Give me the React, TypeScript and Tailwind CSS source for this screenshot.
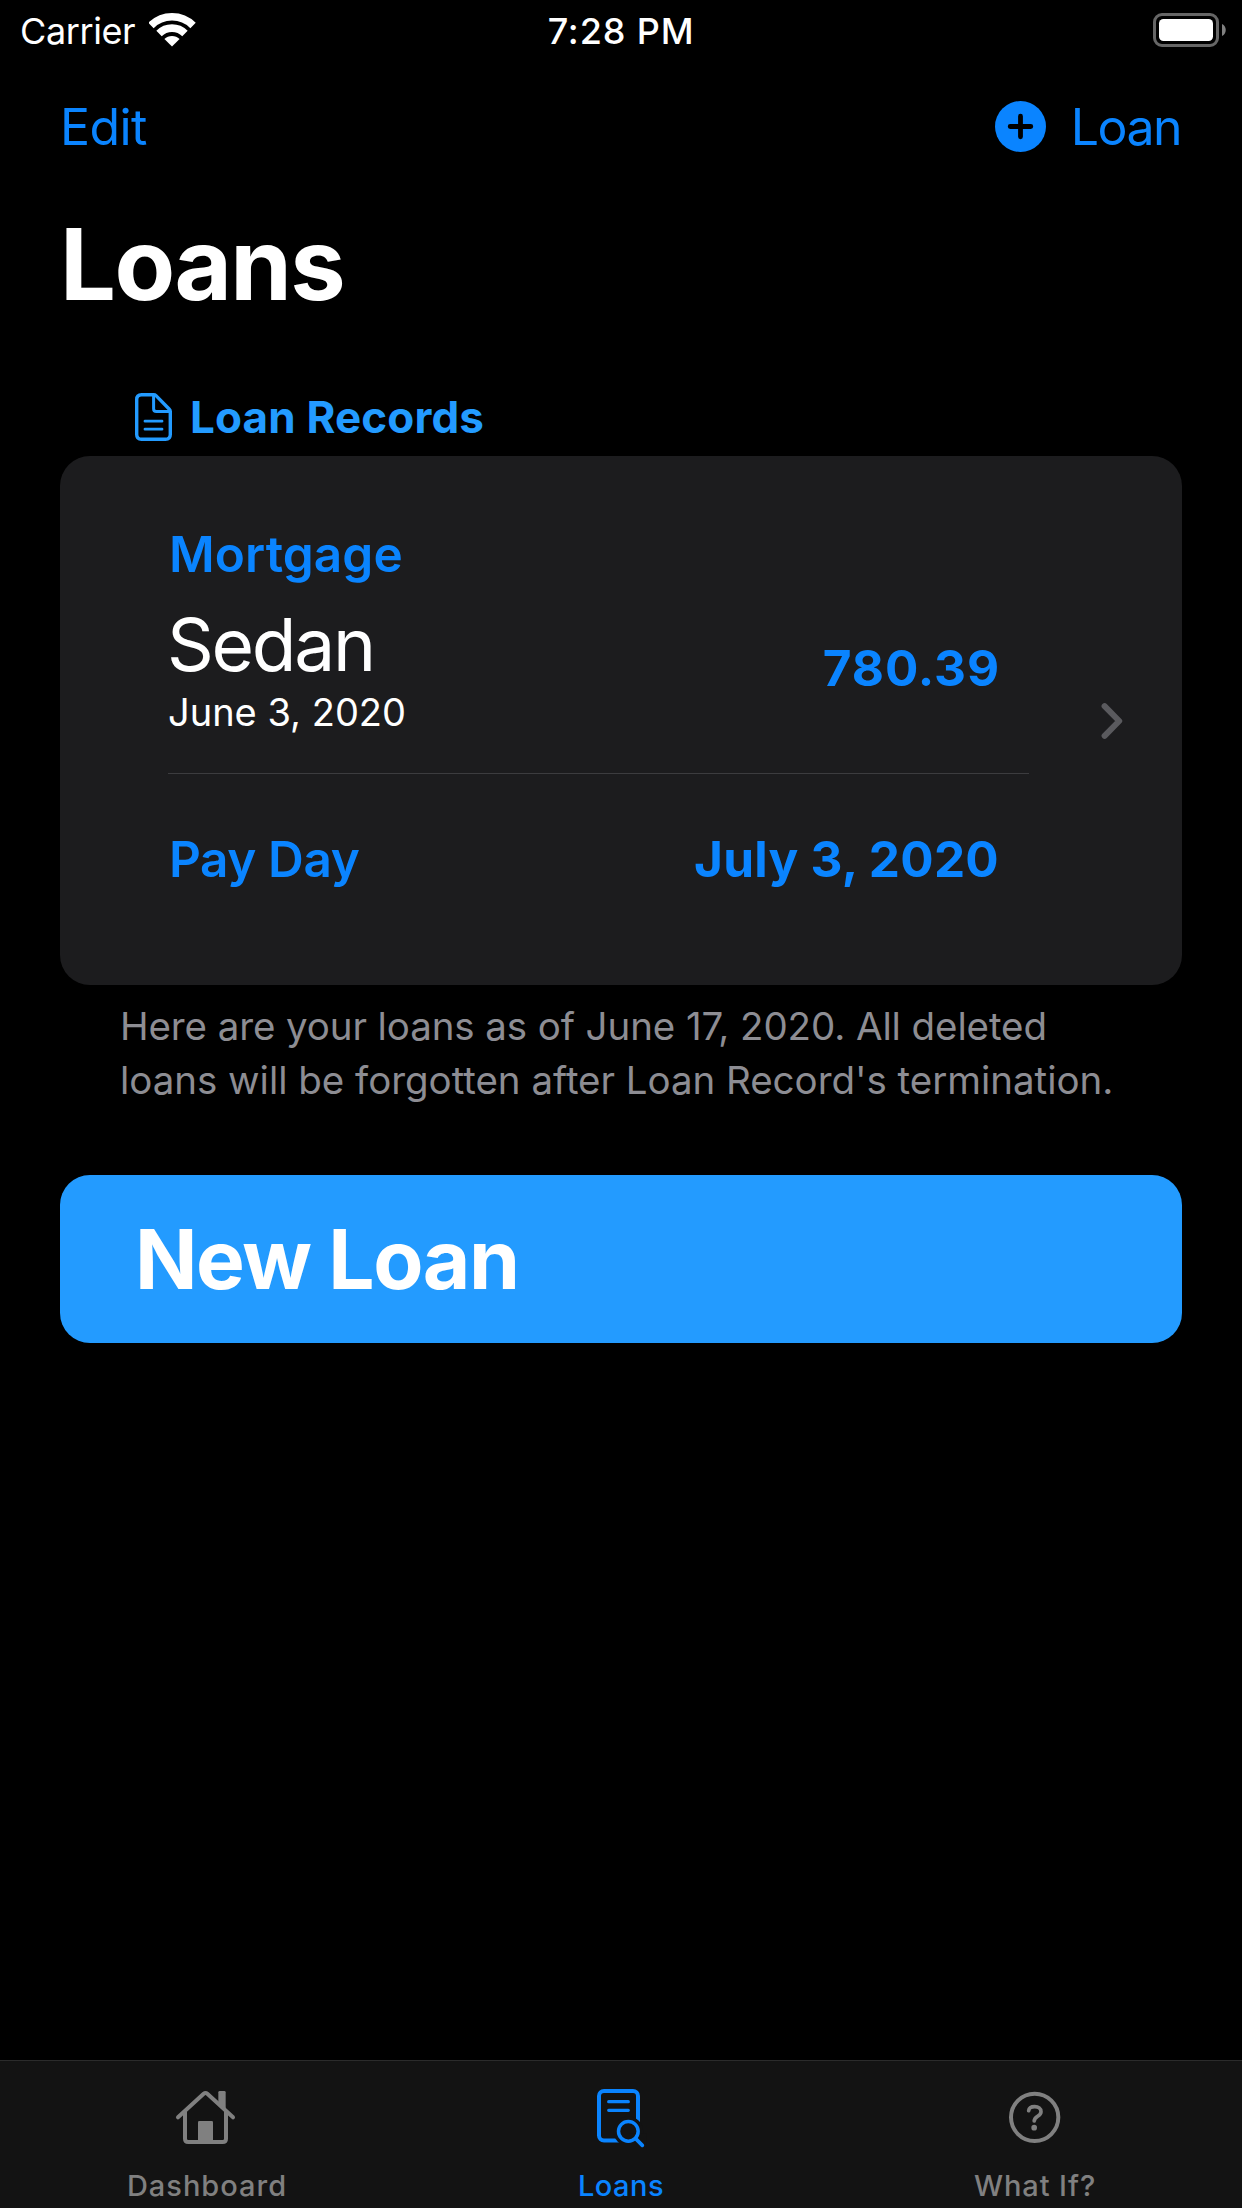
import type { ReactNode } from 'react';

function WifiIcon() {
  return (
    <svg width="48" height="36" viewBox="0 0 48 36" fill="none" stroke="#fff" strokeWidth="7.6">
      <path d="M1.96 13.46A29.75 29.75 0 0 1 44.04 13.46" />
      <path d="M10.03 21.53A18.35 18.35 0 0 1 35.97 21.53" />
      <path d="M23 34.5L15.4 27.1A10.6 10.6 0 0 1 30.6 27.1Z" fill="#fff" stroke="none" />
    </svg>
  );
}

function BatteryIcon() {
  return (
    <svg width="74" height="34" viewBox="0 0 74 34" fill="none">
      <rect x="1.5" y="1.5" width="63" height="31" rx="7.5" stroke="#666" strokeWidth="3" />
      <rect x="6" y="6" width="54" height="22" rx="4.5" fill="#fff" />
      <path d="M69 11C74 13 74 21 69 23Z" fill="#808080" />
    </svg>
  );
}

function PlusCircleIcon() {
  return (
    <svg width="51" height="51" viewBox="0 0 51 51">
      <circle cx="25.5" cy="25.5" r="25.5" fill="#0a84ff" />
      <path d="M25.5 15.2V35.8M15.2 25.5H35.8" stroke="#000" strokeWidth="4.8" strokeLinecap="round" />
    </svg>
  );
}

function DocumentIcon() {
  return (
    <svg width="37" height="48" viewBox="0 0 37 48" fill="none" stroke="#239bff" strokeWidth="3.4" strokeLinejoin="round">
      <path d="M6.5 1.7H18.6C19.6 1.7 20.4 2 21 2.6L34.1 16C34.8 16.7 35.3 17.6 35.3 18.6V41.5Q35.3 46.3 30.5 46.3H6.5Q1.7 46.3 1.7 41.5V6.5Q1.7 1.7 6.5 1.7Z" />
      <path d="M18.6 2V15.8Q18.6 18.6 21.4 18.6H35" strokeWidth="3" />
      <path d="M10 28.2H27M10 36.2H27" strokeWidth="2.8" strokeLinecap="round" />
    </svg>
  );
}

function ChevronIcon() {
  return (
    <svg width="22" height="36" viewBox="0 0 22 36" fill="none">
      <path d="M3.6 3.2L18.2 18L3.6 32.8" stroke="#5a5a5e" strokeWidth="6" strokeLinecap="round" strokeLinejoin="round" />
    </svg>
  );
}

function HomeIcon() {
  return (
    <svg width="80" height="102" viewBox="201 33 240 306" fill="none" stroke="#808080" strokeWidth="12" strokeLinecap="round" strokeLinejoin="round">
      <path d="M234 202L311 131.500Q316.500 126.500 322 131.500L399 202" />
      <path d="M255 186V266Q255 276 265 276H368Q378 276 378 266V186" />
      <path d="M355 164V127Q355 123 359 123H373Q377 123 377 127V182Z" fill="#808080" stroke="none" />
      <path d="M294 276V217Q294 213 298 213H335Q339 213 339 217V276Z" fill="#808080" stroke="none" />
    </svg>
  );
}

function LoansIcon() {
  return (
    <svg width="80" height="102" viewBox="123 33 240 306" fill="none" stroke="#0a84ff" strokeWidth="12" strokeLinecap="round">
      <rect x="177" y="123" width="117" height="148.500" rx="15" />
      <circle cx="265" cy="244" r="44.500" fill="#131313" stroke="none" />
      <path d="M267 250H320V300H240V277H267Z" fill="#131313" stroke="none" />
      <path d="M206 155H265M206 181H265" strokeWidth="9.500" />
      <circle cx="265" cy="244" r="29.500" strokeWidth="10.500" />
      <path d="M287 266L307 286" strokeWidth="11" />
    </svg>
  );
}

function QuestionIcon() {
  return (
    <svg width="80" height="102" viewBox="165 33 240 306" fill="none" stroke="#808080" strokeWidth="12" strokeLinecap="round">
      <circle cx="284" cy="202" r="71" />
      <path d="M266 182C267 174 274 170 284 170C295 170 303 176 303 185C303 192 299 195 293 199C286 203.500 283 206 282.500 213" strokeWidth="11" />
      <circle cx="282.500" cy="233" r="8.500" fill="#808080" stroke="none" />
    </svg>
  );
}

function Tab({ icon, label, className }: { icon: ReactNode; label: string; className: string }) {
  return (
    <button className={`flex flex-col items-center text-[29px] leading-[45px] font-medium ${className}`}>
      {icon}
      <span>{label}</span>
    </button>
  );
}

export default function App() {
  return (
    <div className="flex h-[2208px] w-[1242px] flex-col overflow-hidden bg-black font-['Inter',sans-serif] text-white">
      <header className="flex h-[62px] items-center justify-between pr-[15px] pl-[20px] text-[36px] leading-[62px]">
        <div className="flex flex-1 items-center gap-[14px] tracking-[-0.4px]">
          Carrier
          <span className="pb-0.5">
            <WifiIcon />
          </span>
        </div>
        <div className="font-medium tracking-[0.87px]">7:28 PM</div>
        <div className="flex flex-1 justify-end pb-0.5 pl-[5px]">
          <BatteryIcon />
        </div>
      </header>

      <nav className="flex h-[130px] items-center justify-between pr-[61px] pl-[60px] text-[50px] text-[#0a84ff]">
        <button className="tracking-[-0.6px]">Edit</button>
        <button className="flex items-center gap-[25px] tracking-[-1.55px]">
          <span className="pb-px">
            <PlusCircleIcon />
          </span>
          Loan
        </button>
      </nav>

      <main className="flex flex-1 flex-col px-[60px]">
        <h1 className="text-[99px] leading-[144px] font-bold tracking-[-1.6px]">Loans</h1>

        <section className="mt-[42px]">
          <h2 className="flex h-[77px] items-center gap-[18px] pl-[75px] text-[44px] font-bold tracking-[0.15px] text-[#239bff]">
            <DocumentIcon />
            Loan Records
          </h2>

          <div className="mt-px flex h-[529px] items-center justify-between rounded-[30px] bg-[#1c1c1e] pr-[59px] pl-[108px]">
            <div className="flex h-full w-[861px] flex-col">
              <div className="flex h-[318px] justify-between border-b border-[#3c3c3f] pr-[29px]">
                <div className="pt-[68px]">
                  <div className="pl-px text-[49.5px] leading-[60px] font-semibold tracking-[0.1px] text-[#0a84ff]">Mortgage</div>
                  <div className="mt-[23px] -ml-[1px] text-[73px] leading-[76px] tracking-[-2.3px]">Sedan</div>
                  <div className="mt-[7px] text-[38px] leading-[44px]">June 3, 2020</div>
                </div>
                <div className="pt-[182px] text-[49.5px] leading-[60px] font-bold tracking-[0.9px] text-[#0a84ff]">780.39</div>
              </div>
              <div className="mt-[55px] flex justify-between pr-[30px] text-[49.5px] leading-[60px] text-[#0a84ff]">
                <span className="pl-px font-semibold tracking-[-0.4px]">Pay Day</span>
                <span className="font-bold tracking-[0.25px]">July 3, 2020</span>
              </div>
            </div>
            <ChevronIcon />
          </div>

          <p className="mt-[14px] pl-[60px] text-[38.5px] leading-[54px] text-[#8d8d93] [font-feature-settings:'calt'_0]">
            <span className="tracking-[-0.1px]">Here are your loans as of June 17, 2020. All deleted</span>
            <br />
            <span className="tracking-[-0.03px]">loans will be forgotten after Loan Record's termination.</span>
          </p>
        </section>

        <button className="mt-[68px] flex h-[168px] items-center rounded-[30px] bg-[#239bff] pt-px pl-[75px] text-[82px] font-bold tracking-[-1.5px]">
          New Loan
        </button>
      </main>

      <footer className="grid h-[148px] grid-cols-3 border-t border-[#2b2b2b] bg-[#131313]">
        <Tab icon={<HomeIcon />} label="Dashboard" className="tracking-[1px] text-[#808080]" />
        <Tab icon={<LoansIcon />} label="Loans" className="tracking-[0.47px] text-[#0a84ff]" />
        <Tab icon={<QuestionIcon />} label="What If?" className="tracking-[0.93px] text-[#808080]" />
      </footer>
    </div>
  );
}
